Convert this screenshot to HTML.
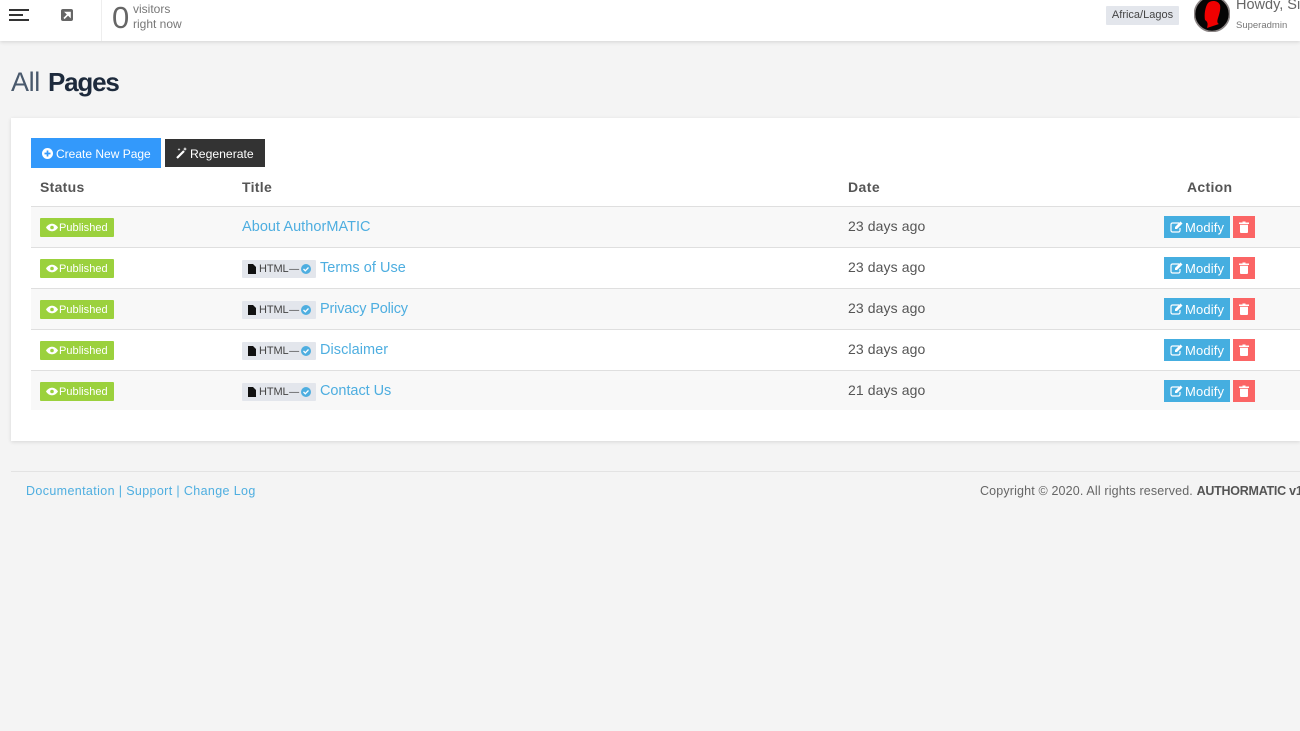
<!DOCTYPE html>
<html>
<head>
<meta charset="utf-8">
<style>
html,body{margin:0;padding:0;width:1300px;height:731px;overflow:hidden;background:#f4f4f4;font-family:"Liberation Sans",sans-serif;color:#555}
.a{position:absolute;white-space:nowrap}
#top{position:absolute;left:0;top:0;width:1300px;height:41px;background:#fff;box-shadow:0 1px 4px rgba(0,0,0,.14)}
#card{position:absolute;left:11px;top:118px;width:1289px;height:323px;background:#fff;box-shadow:0 1px 4px rgba(0,0,0,.12)}
.row{position:absolute;left:31px;width:1269px;height:40px;border-top:1px solid #dfdfdf}
.odd{background:#f8f8f8}
.th{font-size:14px;font-weight:bold;color:#555;letter-spacing:.3px;top:179px;line-height:16px}
.pub{position:absolute;left:40px;width:74px;height:19px;background:#9bd13d;color:#fff;font-size:11px;line-height:19px;border-radius:1px}
.pub svg{position:absolute;left:6px;top:5px}
.pub span{position:absolute;left:19px;top:1px;letter-spacing:.04px}
.lnk{font-size:14.5px;color:#4eaee0;line-height:18px;letter-spacing:.04px}
.date{left:848px;font-size:14px;color:#555;line-height:18px;letter-spacing:.1px}
.tag{position:absolute;left:242px;width:74px;height:18px;background:#e3e6ec;font-size:11px;line-height:18px;color:#444;border-radius:1px}
.tag svg{position:absolute}
.tag span{position:absolute;left:17px;letter-spacing:-.1px;word-spacing:-2px}
.tag i{font-style:normal;font-size:10px}
.mod{position:absolute;left:1164px;width:66px;height:22px;background:#45aee0;color:#fff;font-size:13px;line-height:22px}
.mod span{position:absolute;left:21px;top:1px;letter-spacing:.15px}
.mod svg{position:absolute;left:6px;top:5px}
.del{position:absolute;left:1233px;width:22px;height:22px;background:#fb6565}
.del svg{position:absolute;left:6px;top:5px}
</style>
</head>
<body>
<div id="top"></div>
<svg class="a" style="left:9px;top:8px" width="20" height="14"><rect x="0" y="1" width="20" height="2" fill="#333"/><rect x="0" y="6" width="14" height="2" fill="#333"/><rect x="0" y="11" width="20" height="2" fill="#333"/></svg>
<svg class="a" style="left:60px;top:8px" width="14" height="14" viewBox="0 0 14 14"><rect x="1" y="1" width="12" height="12" rx="2" fill="#666"/><path d="M4 10.5 8 6.5M6 4.5h4v4z" stroke="#fff" stroke-width="1.6" fill="#fff"/></svg>
<div class="a" style="left:101px;top:0;width:1px;height:41px;background:#eee"></div>
<div class="a" style="left:112px;top:0;font-size:31px;line-height:36px;color:#666">0</div>
<div class="a" style="left:133px;top:2px;font-size:12px;line-height:15px;color:#777;letter-spacing:0">visitors<br>right now</div>
<div class="a" style="left:1106px;top:6px;width:73px;height:19px;background:#e3e6ec;border-radius:1px;font-size:11px;line-height:19px;color:#444;text-align:center">Africa/Lagos</div>
<svg class="a" style="left:1194px;top:-4px" width="36" height="36" viewBox="0 0 36 36"><circle cx="18" cy="18" r="17.5" fill="#050505" stroke="#8b8585" stroke-width="1.6"/><path d="M14 7C17 4 24 4 26 9 27 13 25 19 24 22 23 25 23 27 25 28L13 32C14 28 14 26 11 24 10 19 11 11 14 7Z" fill="#f00000"/></svg>
<div class="a" style="left:1236px;top:-4px;font-size:14.5px;line-height:18px;color:#666;letter-spacing:0">Howdy, Si</div>
<div class="a" style="left:1236px;top:20px;font-size:9.5px;line-height:12px;color:#777;letter-spacing:0">Superadmin</div>

<div class="a" style="left:11px;top:66px;font-size:27px;line-height:32px;color:#2c3e55;opacity:.85;letter-spacing:-.4px">All</div>
<div class="a" style="left:48px;top:66px;font-size:26px;line-height:32px;font-weight:bold;color:#1d2a3c;letter-spacing:-1.2px">Pages</div>

<div id="card"></div>
<div class="a" style="left:31px;top:138px;width:130px;height:30px;background:#3399fb"></div>
<svg class="a" style="left:42px;top:148px" width="11" height="11" viewBox="0 0 11 11"><circle cx="5.5" cy="5.5" r="5.5" fill="#fff"/><path d="M5.5 2.5v6M2.5 5.5h6" stroke="#3399fb" stroke-width="1.7"/></svg>
<div class="a" style="left:56px;top:146px;font-size:12px;line-height:17px;color:#fff;letter-spacing:0">Create New Page</div>
<div class="a" style="left:165px;top:139px;width:100px;height:28px;background:#333"></div>
<svg class="a" style="left:176px;top:147px" width="12" height="12" viewBox="0 0 12 12"><path d="M1 11 8 4" stroke="#fff" stroke-width="2.2"/><path d="M9 0l.6 1.5L11 2 9.6 2.6 9 4 8.4 2.6 7 2l1.4-.5zM3 1l.4 1L4.500 2.400 3.400 2.800 3 4 2.600 2.800 1.500 2.400 2.600 2z" fill="#fff"/></svg>
<div class="a" style="left:190px;top:146px;font-size:12.2px;line-height:17px;color:#fff;letter-spacing:0">Regenerate</div>

<div class="a th" style="left:40px">Status</div>
<div class="a th" style="left:242px">Title</div>
<div class="a th" style="left:848px;letter-spacing:.45px">Date</div>
<div class="a th" style="left:1187px">Action</div>

<div class="row odd" style="top:206px"></div>
<div class="row" style="top:247px"></div>
<div class="row odd" style="top:288px"></div>
<div class="row" style="top:329px"></div>
<div class="row odd" style="top:370px;height:39px"></div>

<div class="pub" style="top:218px"><svg width="12" height="9" viewBox="0 0 12 9"><path d="M0 4.500C3 -.5 9 -.5 12 4.500 9 9.500 3 9.500 0 4.500Z" fill="#fff"/><circle cx="6" cy="4.500" r="1.800" fill="#9bd13d"/></svg><span>Published</span></div>
<div class="pub" style="top:259px"><svg width="12" height="9" viewBox="0 0 12 9"><path d="M0 4.500C3 -.5 9 -.5 12 4.500 9 9.500 3 9.500 0 4.500Z" fill="#fff"/><circle cx="6" cy="4.500" r="1.800" fill="#9bd13d"/></svg><span>Published</span></div>
<div class="pub" style="top:300px"><svg width="12" height="9" viewBox="0 0 12 9"><path d="M0 4.500C3 -.5 9 -.5 12 4.500 9 9.500 3 9.500 0 4.500Z" fill="#fff"/><circle cx="6" cy="4.500" r="1.800" fill="#9bd13d"/></svg><span>Published</span></div>
<div class="pub" style="top:341px"><svg width="12" height="9" viewBox="0 0 12 9"><path d="M0 4.500C3 -.5 9 -.5 12 4.500 9 9.500 3 9.500 0 4.500Z" fill="#fff"/><circle cx="6" cy="4.500" r="1.800" fill="#9bd13d"/></svg><span>Published</span></div>
<div class="pub" style="top:382px"><svg width="12" height="9" viewBox="0 0 12 9"><path d="M0 4.500C3 -.5 9 -.5 12 4.500 9 9.500 3 9.500 0 4.500Z" fill="#fff"/><circle cx="6" cy="4.500" r="1.800" fill="#9bd13d"/></svg><span>Published</span></div>

<div class="a lnk" style="left:242px;top:218px">About AuthorMATIC</div>

<div class="tag" style="top:260px"><svg style="left:6px;top:4px" width="8" height="10" viewBox="0 0 8 10"><path d="M0 0H5L8 3V10H0Z" fill="#111"/></svg><span>HTML <i>—</i></span><svg style="left:59px;top:4px" width="10" height="10" viewBox="0 0 10 10"><circle cx="5" cy="5" r="5" fill="#4eaee0"/><path d="M2.500 5 4.300 6.800 7.500 3.500" stroke="#fff" stroke-width="1.300" fill="none"/></svg></div>
<div class="a lnk" style="left:320px;top:259px">Terms of Use</div>
<div class="tag" style="top:301px"><svg style="left:6px;top:4px" width="8" height="10" viewBox="0 0 8 10"><path d="M0 0H5L8 3V10H0Z" fill="#111"/></svg><span>HTML <i>—</i></span><svg style="left:59px;top:4px" width="10" height="10" viewBox="0 0 10 10"><circle cx="5" cy="5" r="5" fill="#4eaee0"/><path d="M2.500 5 4.300 6.800 7.500 3.500" stroke="#fff" stroke-width="1.300" fill="none"/></svg></div>
<div class="a lnk" style="left:320px;top:300px;letter-spacing:-.17px">Privacy Policy</div>
<div class="tag" style="top:342px"><svg style="left:6px;top:4px" width="8" height="10" viewBox="0 0 8 10"><path d="M0 0H5L8 3V10H0Z" fill="#111"/></svg><span>HTML <i>—</i></span><svg style="left:59px;top:4px" width="10" height="10" viewBox="0 0 10 10"><circle cx="5" cy="5" r="5" fill="#4eaee0"/><path d="M2.500 5 4.300 6.800 7.500 3.500" stroke="#fff" stroke-width="1.300" fill="none"/></svg></div>
<div class="a lnk" style="left:320px;top:341px">Disclaimer</div>
<div class="tag" style="top:383px"><svg style="left:6px;top:4px" width="8" height="10" viewBox="0 0 8 10"><path d="M0 0H5L8 3V10H0Z" fill="#111"/></svg><span>HTML <i>—</i></span><svg style="left:59px;top:4px" width="10" height="10" viewBox="0 0 10 10"><circle cx="5" cy="5" r="5" fill="#4eaee0"/><path d="M2.500 5 4.300 6.800 7.500 3.500" stroke="#fff" stroke-width="1.300" fill="none"/></svg></div>
<div class="a lnk" style="left:320px;top:382px;letter-spacing:-.05px">Contact Us</div>

<div class="a date" style="top:217px">23 days ago</div>
<div class="a date" style="top:258px">23 days ago</div>
<div class="a date" style="top:299px">23 days ago</div>
<div class="a date" style="top:340px">23 days ago</div>
<div class="a date" style="top:381px">21 days ago</div>

<div class="mod" style="top:216px"><svg width="13" height="12" viewBox="0 0 13 12"><path d="M9 2H2.500A1.500 1.500 0 0 0 1 3.500V9.500A1.500 1.500 0 0 0 2.500 11H8.500A1.500 1.500 0 0 0 10 9.500V7" stroke="#fff" stroke-width="1.200" fill="none"/><path d="M5 6 10.500 .5 12.500 2.500 7 8H5Z" fill="#fff"/></svg><span>Modify</span></div>
<div class="mod" style="top:257px"><svg width="13" height="12" viewBox="0 0 13 12"><path d="M9 2H2.500A1.500 1.500 0 0 0 1 3.500V9.500A1.500 1.500 0 0 0 2.500 11H8.500A1.500 1.500 0 0 0 10 9.500V7" stroke="#fff" stroke-width="1.200" fill="none"/><path d="M5 6 10.500 .5 12.500 2.500 7 8H5Z" fill="#fff"/></svg><span>Modify</span></div>
<div class="mod" style="top:298px"><svg width="13" height="12" viewBox="0 0 13 12"><path d="M9 2H2.500A1.500 1.500 0 0 0 1 3.500V9.500A1.500 1.500 0 0 0 2.500 11H8.500A1.500 1.500 0 0 0 10 9.500V7" stroke="#fff" stroke-width="1.200" fill="none"/><path d="M5 6 10.500 .5 12.500 2.500 7 8H5Z" fill="#fff"/></svg><span>Modify</span></div>
<div class="mod" style="top:339px"><svg width="13" height="12" viewBox="0 0 13 12"><path d="M9 2H2.500A1.500 1.500 0 0 0 1 3.500V9.500A1.500 1.500 0 0 0 2.500 11H8.500A1.500 1.500 0 0 0 10 9.500V7" stroke="#fff" stroke-width="1.200" fill="none"/><path d="M5 6 10.500 .5 12.500 2.500 7 8H5Z" fill="#fff"/></svg><span>Modify</span></div>
<div class="mod" style="top:380px"><svg width="13" height="12" viewBox="0 0 13 12"><path d="M9 2H2.500A1.500 1.500 0 0 0 1 3.500V9.500A1.500 1.500 0 0 0 2.500 11H8.500A1.500 1.500 0 0 0 10 9.500V7" stroke="#fff" stroke-width="1.200" fill="none"/><path d="M5 6 10.500 .5 12.500 2.500 7 8H5Z" fill="#fff"/></svg><span>Modify</span></div>

<div class="del" style="top:216px"><svg width="10" height="12" viewBox="0 0 10 12"><path d="M3.500 1.500V.5H6.500V1.500H10V3H0V1.500ZM1 3.800H9V11A1 1 0 0 1 8 12H2A1 1 0 0 1 1 11Z" fill="#fff"/></svg></div>
<div class="del" style="top:257px"><svg width="10" height="12" viewBox="0 0 10 12"><path d="M3.500 1.500V.5H6.500V1.500H10V3H0V1.500ZM1 3.800H9V11A1 1 0 0 1 8 12H2A1 1 0 0 1 1 11Z" fill="#fff"/></svg></div>
<div class="del" style="top:298px"><svg width="10" height="12" viewBox="0 0 10 12"><path d="M3.500 1.500V.5H6.500V1.500H10V3H0V1.500ZM1 3.800H9V11A1 1 0 0 1 8 12H2A1 1 0 0 1 1 11Z" fill="#fff"/></svg></div>
<div class="del" style="top:339px"><svg width="10" height="12" viewBox="0 0 10 12"><path d="M3.500 1.500V.5H6.500V1.500H10V3H0V1.500ZM1 3.800H9V11A1 1 0 0 1 8 12H2A1 1 0 0 1 1 11Z" fill="#fff"/></svg></div>
<div class="del" style="top:380px"><svg width="10" height="12" viewBox="0 0 10 12"><path d="M3.500 1.500V.5H6.500V1.500H10V3H0V1.500ZM1 3.800H9V11A1 1 0 0 1 8 12H2A1 1 0 0 1 1 11Z" fill="#fff"/></svg></div>

<div class="a" style="left:11px;top:471px;width:1289px;height:1px;background:#e3e3e3"></div>
<div class="a" style="left:26px;top:483px;font-size:12.5px;line-height:17px;color:#4eaee0;letter-spacing:.37px">Documentation | Support | Change Log</div>
<div class="a" style="left:980px;top:483px;font-size:12.5px;line-height:17px;color:#666;letter-spacing:.15px">Copyright © 2020. All rights reserved. <b style="color:#555;letter-spacing:-.25px">AUTHORMATIC v1</b></div>
</body>
</html>
